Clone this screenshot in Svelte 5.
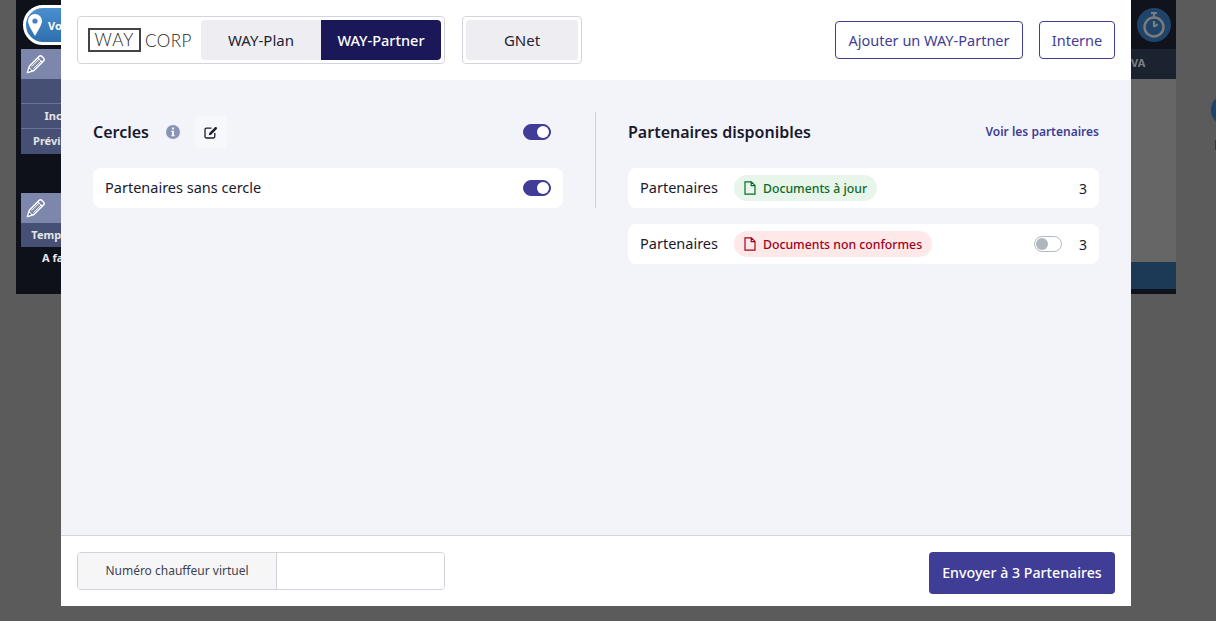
<script>
  let virtualNumber = $state("");
  const partners = [
    { tone: "ok", label: "Documents à jour", count: 3, toggle: false },
    { tone: "bad", label: "Documents non conformes", count: 3, toggle: true }
  ];
</script>

{#snippet pencil()}
  <svg class="pencil" viewBox="0 0 20 20" width="20" height="20" aria-hidden="true">
    <path d="M1.500 18.500l2-6.500 9.500-9.500c.9-.9 2.100-.9 3 0l1.500 1.500c.9.900.9 2.100 0 3L8 16.500z" fill="none" stroke="#fff" stroke-width="1.500" stroke-linejoin="round" />
    <path d="M5.500 12.700l8-8M7.500 14.600l8-8M11.700 3.800l4.600 4.600" fill="none" stroke="#fff" stroke-width="1" />
    <path d="M1 19l1.800-6 4.200 4.200z" fill="#fff" />
    <path d="M2.400 17.600l.8-2.800 2 2z" fill="#465074" />
  </svg>
{/snippet}

{#snippet doc()}
  <svg class="doc" viewBox="0 0 12 14" width="12" height="14" aria-hidden="true">
    <path d="M1 .8h6.400L11 4.400v8.800H1z M7.200 .8v3.800H11" fill="none" stroke="currentColor" stroke-width="1.200" />
  </svg>
{/snippet}

<div class="app">
  <aside class="side">
    <div class="pin">
      <svg viewBox="0 0 14 22" width="14" height="22" aria-hidden="true">
        <path fill-rule="evenodd" d="M7 0a7 7 0 0 1 7 7c0 3.600-4.500 10.500-7 15C4.500 17.500 0 10.600 0 7a7 7 0 0 1 7-7zm0 4.400a2.600 2.600 0 1 0 0 5.200 2.600 2.600 0 0 0 0-5.200z" fill="#fff" />
      </svg>
      <span>Voir</span>
    </div>
    <div class="card first">
      <div class="card-top">{@render pencil()}</div>
      <div class="card-fill"></div>
      <div class="card-line">Inclus</div>
      <div class="card-line">Prévisions</div>
    </div>
    <div class="card second">
      <div class="card-top">{@render pencil()}</div>
      <div class="card-line">Temps réel</div>
    </div>
    <p class="todo">A faire</p>
  </aside>
  <div class="center"></div>
  <div class="rail">
    <div class="rail-top">
      <span class="timer">
        <svg viewBox="0 0 24 28" width="24" height="28" aria-hidden="true">
          <circle cx="12" cy="16" r="9.500" fill="none" stroke="#7c7c7c" stroke-width="2.400" />
          <path d="M9 2h6M12 2v4M12 16l3.600-2.800M12 16v-6" stroke="#7c7c7c" stroke-width="2.200" fill="none" />
        </svg>
      </span>
    </div>
    <div class="rail-head">VA</div>
    <div class="rail-body"></div>
    <div class="rail-bar"></div>
    <div class="rail-end"></div>
  </div>
</div>
<span class="peek"></span>
<span class="peek-mark"></span>

<section class="modal">
  <header>
    <div class="group">
      <div class="logo"><span class="logo-box">WAY</span><span class="logo-name">CORP</span></div>
      <button class="tab">WAY-Plan</button>
      <button class="tab active">WAY-Partner</button>
    </div>
    <div class="group single">
      <button class="tab rounded">GNet</button>
    </div>
    <div class="actions">
      <button class="outline wide">Ajouter un WAY-Partner</button>
      <button class="outline">Interne</button>
    </div>
  </header>

  <main>
    <div class="col">
      <div class="title-row">
        <h2>Cercles</h2>
        <svg class="info" viewBox="0 0 14 14" width="14" height="14" aria-hidden="true">
          <path fill-rule="evenodd" d="M7 0a7 7 0 1 1 0 14A7 7 0 0 1 7 0zM6 2.500v2.100h2V2.500zM5.300 5.800v1.200H6v3H5.300v1.200h3.400V10H8V5.800z" fill="#8a94b8" />
        </svg>
        <button class="edit" aria-label="Modifier">
          <svg viewBox="0 0 14 13" width="14" height="13" aria-hidden="true">
            <path d="M7.500 2.200H2.400c-.8 0-1.400.6-1.400 1.400v7c0 .8.600 1.400 1.400 1.400h7c.8 0 1.400-.6 1.400-1.400V7" fill="none" stroke="#1d1d2b" stroke-width="1.300" />
            <path d="M4.800 9.200l.5-2.300L11 1.200c.4-.4 1-.4 1.400 0l.4.400c.4.4.4 1 0 1.400L7.100 8.700z" fill="#1d1d2b" />
          </svg>
        </button>
        <span class="switch on end"></span>
      </div>
      <div class="row">
        <span class="name">Partenaires sans cercle</span>
        <span class="switch on end"></span>
      </div>
    </div>

    <div class="divider"></div>

    <div class="col">
      <div class="title-row">
        <h2>Partenaires disponibles</h2>
        <a class="end" href="/#">Voir les partenaires</a>
      </div>
      {#each partners as partner}
        <div class="row">
          <span class="name">Partenaires</span>
          <span class="badge {partner.tone}">{@render doc()}{partner.label}</span>
          {#if partner.toggle}
            <span class="switch end"></span>
            <span class="count">{partner.count}</span>
          {:else}
            <span class="count end">{partner.count}</span>
          {/if}
        </div>
      {/each}
    </div>
  </main>

  <footer>
    <label class="field">
      <span>Numéro chauffeur virtuel</span>
      <input bind:value={virtualNumber} />
    </label>
    <button class="send">Envoyer à 3 Partenaires</button>
  </footer>
</section>

<style>
  :global(body) {
    background: #5b5b5b;
    font-family: "Noto Sans", "Open Sans", sans-serif;
    overflow: hidden;
  }

  .app {
    width: 1160px;
    height: 294px;
    margin-left: 16px;
    display: flex;
    background: #0e111a;
  }

  .side {
    width: 90px;
    flex: none;
  }

  .pin {
    width: 70px;
    height: 40px;
    box-sizing: border-box;
    margin: 5px 0 4px 7px;
    padding-left: 2px;
    display: flex;
    align-items: center;
    gap: 6px;
    background: linear-gradient(#4a8fd0, #2e6fae);
    border: 3px solid #fff;
    border-radius: 20px;
    color: #fff;
    font-size: 11px;
    font-weight: 700;
  }

  .card {
    margin-left: 5px;
    width: 80px;
    background: #465074;
  }

  .first {
    height: 105px;
  }

  .second {
    height: 54px;
    margin-top: 39px;
  }

  .card-top {
    height: 30px;
    background: #7d87ab;
    display: flex;
    align-items: center;
    padding-left: 5px;
  }

  .card-fill {
    height: 24px;
    border-bottom: 1px solid #6a7496;
  }

  .card-line {
    height: 24px;
    line-height: 24px;
    white-space: nowrap;
    color: #e4e4e4;
    font-size: 11px;
    font-weight: 700;
    text-align: center;
    border-bottom: 1px solid #6a7496;
  }

  .card-line:last-child {
    border-bottom: 0;
  }

  .todo {
    margin: 3px 0 0 4px;
    width: 80px;
    text-align: center;
    white-space: nowrap;
    color: #e9e9e9;
    font-size: 11px;
    font-weight: 700;
    line-height: 16px;
  }

  .center {
    flex: 1;
  }

  .rail {
    width: 45px;
    flex: none;
    display: flex;
    flex-direction: column;
  }

  .rail-top {
    height: 49px;
    display: flex;
    align-items: center;
    justify-content: center;
    background: #10131c;
  }

  .timer {
    width: 34px;
    height: 34px;
    border-radius: 50%;
    background: #1f4469;
    display: flex;
    align-items: center;
    justify-content: center;
  }

  .rail-head {
    height: 30px;
    line-height: 28px;
    background: #1b2330;
    color: #7c7f86;
    font-size: 11px;
    font-weight: 700;
  }

  .rail-body {
    flex: 1;
    background: #666;
  }

  .rail-bar {
    height: 27px;
    background: #1c3a56;
  }

  .rail-end {
    height: 5px;
    background: #10131c;
  }

  .peek {
    position: absolute;
    left: 1211px;
    top: 94px;
    width: 32px;
    height: 32px;
    border-radius: 50%;
    background: #1f4469;
  }

  .peek-mark {
    position: absolute;
    left: 1215px;
    top: 140px;
    width: 1px;
    height: 10px;
    background: #2b3a4e;
  }

  .modal {
    position: absolute;
    left: 61px;
    top: 0;
    width: 1070px;
    height: 606px;
    display: flex;
    flex-direction: column;
    background: #fff;
    color: #1a1a2e;
  }

  button {
    font-family: inherit;
    cursor: pointer;
  }

  header {
    height: 80px;
    box-sizing: border-box;
    padding: 16px;
    display: flex;
    align-items: flex-start;
    gap: 17px;
  }

  .group {
    height: 48px;
    box-sizing: border-box;
    display: flex;
    padding: 3px;
    background: #fff;
    border: 1px solid #d2d5e0;
    border-radius: 4px;
  }

  .logo {
    width: 120px;
    box-sizing: border-box;
    padding-left: 7px;
    display: flex;
    align-items: center;
    gap: 4px;
    font-family: Lato, sans-serif;
    font-weight: 300;
    color: #222;
  }

  .logo-box {
    width: 53px;
    height: 24px;
    box-sizing: border-box;
    border: 2px solid #444;
    text-align: center;
    font-size: 17px;
    line-height: 20px;
    letter-spacing: 1px;
  }

  .logo-name {
    font-size: 17px;
    letter-spacing: 0.5px;
  }

  .tab {
    width: 120px;
    height: 40px;
    border: 0;
    padding: 0;
    background: #eeeef2;
    color: #1f2333;
    font-size: 15px;
  }

  .tab:first-of-type {
    border-radius: 4px 0 0 4px;
  }

  .tab.active {
    background: #1a1859;
    color: #fff;
    font-size: 14.500px;
    font-weight: 500;
    border-radius: 0 4px 4px 0;
  }

  .tab.rounded {
    width: 112px;
    border-radius: 4px;
  }

  .actions {
    margin-left: auto;
    margin-top: 5px;
    display: flex;
    gap: 16px;
  }

  .outline {
    height: 38px;
    width: 76px;
    padding: 0;
    background: #fff;
    border: 1px solid #3f3d95;
    border-radius: 4px;
    color: #3f3d95;
    font-size: 14.500px;
  }

  .outline.wide {
    width: 188px;
  }

  main {
    flex: 1;
    box-sizing: border-box;
    padding: 32px 32px 0;
    display: flex;
    align-items: flex-start;
    background: #f3f4f9;
    border-bottom: 1px solid #d5d6e0;
  }

  .col {
    width: 470px;
    display: flex;
    flex-direction: column;
    gap: 16px;
  }

  .col:last-child {
    width: 471px;
  }

  .divider {
    width: 1px;
    height: 96px;
    margin: 0 32px;
    background: #cfd0dc;
  }

  .title-row {
    height: 40px;
    display: flex;
    align-items: center;
    padding-right: 12px;
  }

  .col:last-child .title-row {
    padding-right: 0;
  }

  h2 {
    margin: 0;
    font-size: 16px;
    font-weight: 600;
    color: #1a1a2e;
  }

  .info {
    margin-left: 17px;
  }

  .edit {
    width: 32px;
    height: 32px;
    margin-left: 15px;
    padding: 0;
    border: 0;
    border-radius: 4px;
    background: #f7f8fc;
    display: flex;
    align-items: center;
    justify-content: center;
  }

  .end {
    margin-left: auto;
  }

  a {
    margin-bottom: 2px;
    color: #3f3d95;
    font-size: 12px;
    font-weight: 600;
    text-decoration: none;
  }

  .row {
    height: 40px;
    box-sizing: border-box;
    padding: 0 12px;
    display: flex;
    align-items: center;
    background: #fff;
    border-radius: 8px;
    font-size: 14.500px;
    color: #1a1a2e;
  }

  .name {
    margin-bottom: 2px;
  }

  .badge {
    height: 26px;
    margin-left: 16px;
    padding: 0 10px;
    display: flex;
    align-items: center;
    gap: 7px;
    border-radius: 13px;
    font-size: 12.250px;
    font-weight: 500;
  }

  .badge.ok {
    background: #e7f5ea;
    color: #0b6b2b;
  }

  .badge.bad {
    background: #ffe9e8;
    color: #a00020;
  }

  .count {
    width: 8px;
    margin-left: 17px;
    font-size: 14px;
  }

  .count.end {
    margin-left: auto;
  }

  .switch {
    position: relative;
    width: 28px;
    height: 16px;
    box-sizing: border-box;
    flex: none;
    border: 1px solid #b4bac4;
    border-radius: 8px;
    background: #fff;
  }

  .switch::after {
    content: "";
    position: absolute;
    left: 1px;
    top: 1px;
    width: 12px;
    height: 12px;
    border-radius: 50%;
    background: #b0b6be;
  }

  .switch.on {
    background: #3f3d95;
    border-color: #3f3d95;
  }

  .switch.on::after {
    left: 13px;
    background: #fff;
  }

  footer {
    flex: 1;
    max-height: 70px;
    box-sizing: border-box;
    padding: 16px;
    display: flex;
    justify-content: space-between;
    align-items: flex-start;
  }

  .field {
    width: 368px;
    height: 38px;
    box-sizing: border-box;
    display: flex;
    border: 1px solid #d0d3de;
    border-radius: 4px;
    overflow: hidden;
  }

  .field span {
    width: 198px;
    flex: none;
    line-height: 35px;
    text-align: center;
    background: #f6f6f7;
    border-right: 1px solid #d0d3de;
    color: #3d4252;
    font-size: 12px;
  }

  input {
    flex: 1;
    min-width: 0;
    border: 0;
    outline: 0;
  }

  .send {
    width: 186px;
    height: 42px;
    padding: 0 0 2px;
    border: 0;
    border-radius: 4px;
    background: #3f3d95;
    color: #fff;
    font-size: 14.200px;
    font-weight: 500;
  }
</style>
